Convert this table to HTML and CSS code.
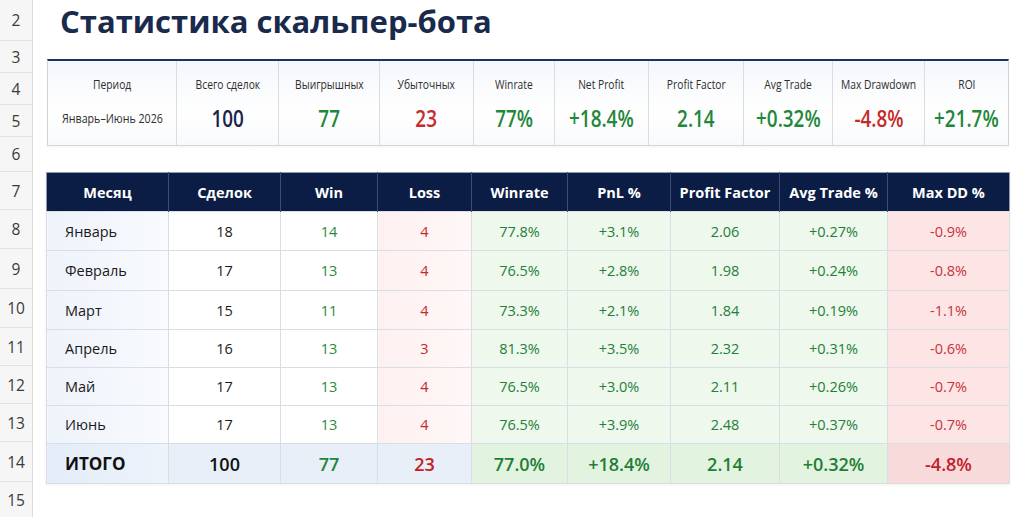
FILE: index.html
```html
<!DOCTYPE html>
<html lang="ru">
<head>
<meta charset="utf-8">
<title>Статистика скальпер-бота</title>
<link rel="stylesheet" href="styles.css">
</head>
<body>
<div class="sheet">
  <div class="gutter">
    <div class="rn r2">2</div>
    <div class="rn r3">3</div>
    <div class="rn r4">4</div>
    <div class="rn r5">5</div>
    <div class="rn r6">6</div>
    <div class="rn r7">7</div>
    <div class="rn r8">8</div>
    <div class="rn r9">9</div>
    <div class="rn r10">10</div>
    <div class="rn r11">11</div>
    <div class="rn r12">12</div>
    <div class="rn r13">13</div>
    <div class="rn r14">14</div>
    <div class="rn r15">15</div>
  </div>
  <div class="main">
    <h1 class="title">Статистика скальпер-бота</h1>
    <div class="card">
      <div class="kpi"><div class="lbl">Период</div><div class="val period">Январь–Июнь 2026</div></div>
      <div class="kpi"><div class="lbl">Всего сделок</div><div class="val navy">100</div></div>
      <div class="kpi"><div class="lbl">Выигрышных</div><div class="val green">77</div></div>
      <div class="kpi"><div class="lbl">Убыточных</div><div class="val red">23</div></div>
      <div class="kpi"><div class="lbl">Winrate</div><div class="val green">77%</div></div>
      <div class="kpi"><div class="lbl">Net Profit</div><div class="val green">+18.4%</div></div>
      <div class="kpi"><div class="lbl">Profit Factor</div><div class="val green">2.14</div></div>
      <div class="kpi"><div class="lbl">Avg Trade</div><div class="val green">+0.32%</div></div>
      <div class="kpi"><div class="lbl">Max Drawdown</div><div class="val red">-4.8%</div></div>
      <div class="kpi"><div class="lbl">ROI</div><div class="val green">+21.7%</div></div>
    </div>
    <table class="stats">
      <colgroup>
        <col class="c-month"><col class="c-deals"><col class="c-win"><col class="c-loss"><col class="c-wr"><col class="c-pnl"><col class="c-pf"><col class="c-avg"><col class="c-dd">
      </colgroup>
      <thead>
        <tr><th>Месяц</th><th>Сделок</th><th>Win</th><th>Loss</th><th>Winrate</th><th>PnL %</th><th>Profit Factor</th><th>Avg Trade %</th><th>Max DD %</th></tr>
      </thead>
      <tbody>
        <tr class="h39"><td class="month">Январь</td><td class="deals">18</td><td class="win">14</td><td class="loss">4</td><td class="pos">77.8%</td><td class="pos">+3.1%</td><td class="pos">2.06</td><td class="pos">+0.27%</td><td class="dd">-0.9%</td></tr>
        <tr class="h40"><td class="month">Февраль</td><td class="deals">17</td><td class="win">13</td><td class="loss">4</td><td class="pos">76.5%</td><td class="pos">+2.8%</td><td class="pos">1.98</td><td class="pos">+0.24%</td><td class="dd">-0.8%</td></tr>
        <tr class="h39"><td class="month">Март</td><td class="deals">15</td><td class="win">11</td><td class="loss">4</td><td class="pos">73.3%</td><td class="pos">+2.1%</td><td class="pos">1.84</td><td class="pos">+0.19%</td><td class="dd">-1.1%</td></tr>
        <tr class="h38"><td class="month">Апрель</td><td class="deals">16</td><td class="win">13</td><td class="loss">3</td><td class="pos">81.3%</td><td class="pos">+3.5%</td><td class="pos">2.32</td><td class="pos">+0.31%</td><td class="dd">-0.6%</td></tr>
        <tr class="h38"><td class="month">Май</td><td class="deals">17</td><td class="win">13</td><td class="loss">4</td><td class="pos">76.5%</td><td class="pos">+3.0%</td><td class="pos">2.11</td><td class="pos">+0.26%</td><td class="dd">-0.7%</td></tr>
        <tr class="h38"><td class="month">Июнь</td><td class="deals">17</td><td class="win">13</td><td class="loss">4</td><td class="pos">76.5%</td><td class="pos">+3.9%</td><td class="pos">2.48</td><td class="pos">+0.37%</td><td class="dd">-0.7%</td></tr>
      </tbody>
      <tfoot>
        <tr><td class="month">ИТОГО</td><td class="deals">100</td><td class="win">77</td><td class="loss">23</td><td class="pos">77.0%</td><td class="pos">+18.4%</td><td class="pos">2.14</td><td class="pos">+0.32%</td><td class="dd">-4.8%</td></tr>
      </tfoot>
    </table>
  </div>
</div>
</body>
</html>
```

FILE: styles.css
```css
html, body {
  margin: 0;
  padding: 0;
  background: #ffffff;
}
body {
  width: 1024px;
  height: 517px;
  overflow: hidden;
  font-family: "Open Sans", "Noto Sans", sans-serif;
  color: #222;
}
.sheet {
  display: flex;
  height: 517px;
}
.gutter {
  width: 32px;
  flex: none;
  background: #f6f6f6;
  border-right: 1px solid #dcdcdc;
  display: flex;
  flex-direction: column;
}
.rn {
  box-sizing: border-box;
  border-bottom: 1px solid #e2e2e2;
  display: flex;
  align-items: center;
  justify-content: center;
  font-size: 15.5px;
  color: #3a3a3a;
}
.r2 { height: 41px; }
.r3, .r4, .r5 { height: 32px; }
.r6 { height: 35px; }
.r7 { height: 38px; }
.r8 { height: 39px; }
.r9 { height: 40px; }
.r10 { height: 39px; }
.r11, .r12, .r13 { height: 38px; }
.r14 { height: 40px; }
.r15 { height: 35px; border-bottom: none; }

.main {
  flex: 1;
  padding-left: 12px;
}
.title {
  margin: 0 0 17px 15px;
  font-size: 31px;
  line-height: 42px;
  font-weight: 700;
  color: #1a2a4c;
}

.card {
  box-sizing: border-box;
  margin-left: 2px;
  width: 962px;
  height: 87px;
  border: 1px solid #d0d6df;
  border-top: 2px solid #1d325c;
  background: linear-gradient(#f4f7fb, #ffffff 60%, #f8f9fb);
  display: grid;
  grid-template-columns: 129px 102px 101px 94px 81px 94px 95px 89px 92px 1fr;
  box-shadow: 0 1px 2px rgba(0,0,0,0.05);
}
.kpi {
  border-right: 1px solid #d8dde5;
  display: flex;
  flex-direction: column;
  align-items: center;
  padding-top: 15px;
  overflow: hidden;
}
.kpi:last-child { border-right: none; }
.lbl {
  font-size: 13px;
  line-height: 16px;
  color: #2e2e2e;
  white-space: nowrap;
  transform: scaleX(0.79);
}
.val {
  margin-top: 11px;
  font-size: 23px;
  line-height: 30px;
  font-weight: 600;
  white-space: nowrap;
  transform: scaleX(0.82);
}
.val.period {
  font-size: 13px;
  font-weight: 400;
  color: #2e2e2e;
  transform: scaleX(0.82);
}
.navy { color: #17244a; }
.green { color: #22873a; }
.red { color: #c62a2a; }

.stats {
  margin-top: 26px;
  margin-left: 1px;
  width: 963px;
  table-layout: fixed;
  border-collapse: collapse;
  border: 1px solid #8e9bb1;
  font-size: 14.5px;
  box-shadow: 0 1px 3px rgba(0,0,0,0.06);
}
.c-month { width: 122px; }
.c-deals { width: 112px; }
.c-win { width: 97px; }
.c-loss { width: 94px; }
.c-wr { width: 96px; }
.c-pnl { width: 103px; }
.c-pf { width: 109px; }
.c-avg { width: 108px; }
.c-dd { width: 122px; }

.stats th {
  height: 38px;
  padding: 0;
  background: #0b1d45;
  color: #ffffff;
  font-weight: 700;
  font-size: 14.5px;
  border-left: 1px solid #3b4d74;
  text-align: center;
}
.stats th:first-child { border-left: none; }
.stats td {
  padding: 0;
  text-align: center;
  border: 1px solid #d9dee6;
  color: #1a1a1a;
}
.h38 td { height: 37px; }
.h39 td { height: 38px; }
.h40 td { height: 39px; }

.stats td.month {
  text-align: left;
  padding-left: 18px;
  background: linear-gradient(90deg, #eef3fa, #f8fafd);
}
.stats td.deals { background: #ffffff; }
.stats td.win { background: #ffffff; color: #2a8a3c; }
.stats td.loss { background: linear-gradient(90deg, #fdf0f0, #fff7f7); color: #c32a2a; border-left-color: #cdd3dc; }
.stats td.pos { background: #eef8ec; color: #23803a; }
.stats td.dd { background: #fde5e5; color: #c8323a; }

.stats tfoot td {
  height: 39px;
  font-weight: 600;
  font-size: 18px;
  border-top: 1px solid #8e9bb1;
}
.stats tfoot td.month { background: linear-gradient(90deg, #e3ecf8, #edf3fa); font-size: 17px; font-weight: 700; color: #111; }
.stats tfoot td.deals { background: #e8eff8; color: #111; }
.stats tfoot td.win { background: #e8eff8; color: #22873a; }
.stats tfoot td.loss { background: #e8eff8; color: #c42020; }
.stats tfoot td.pos { background: #e2f3e0; color: #1f7f36; }
.stats tfoot td.dd { background: #f9dada; color: #c2202a; }
```
